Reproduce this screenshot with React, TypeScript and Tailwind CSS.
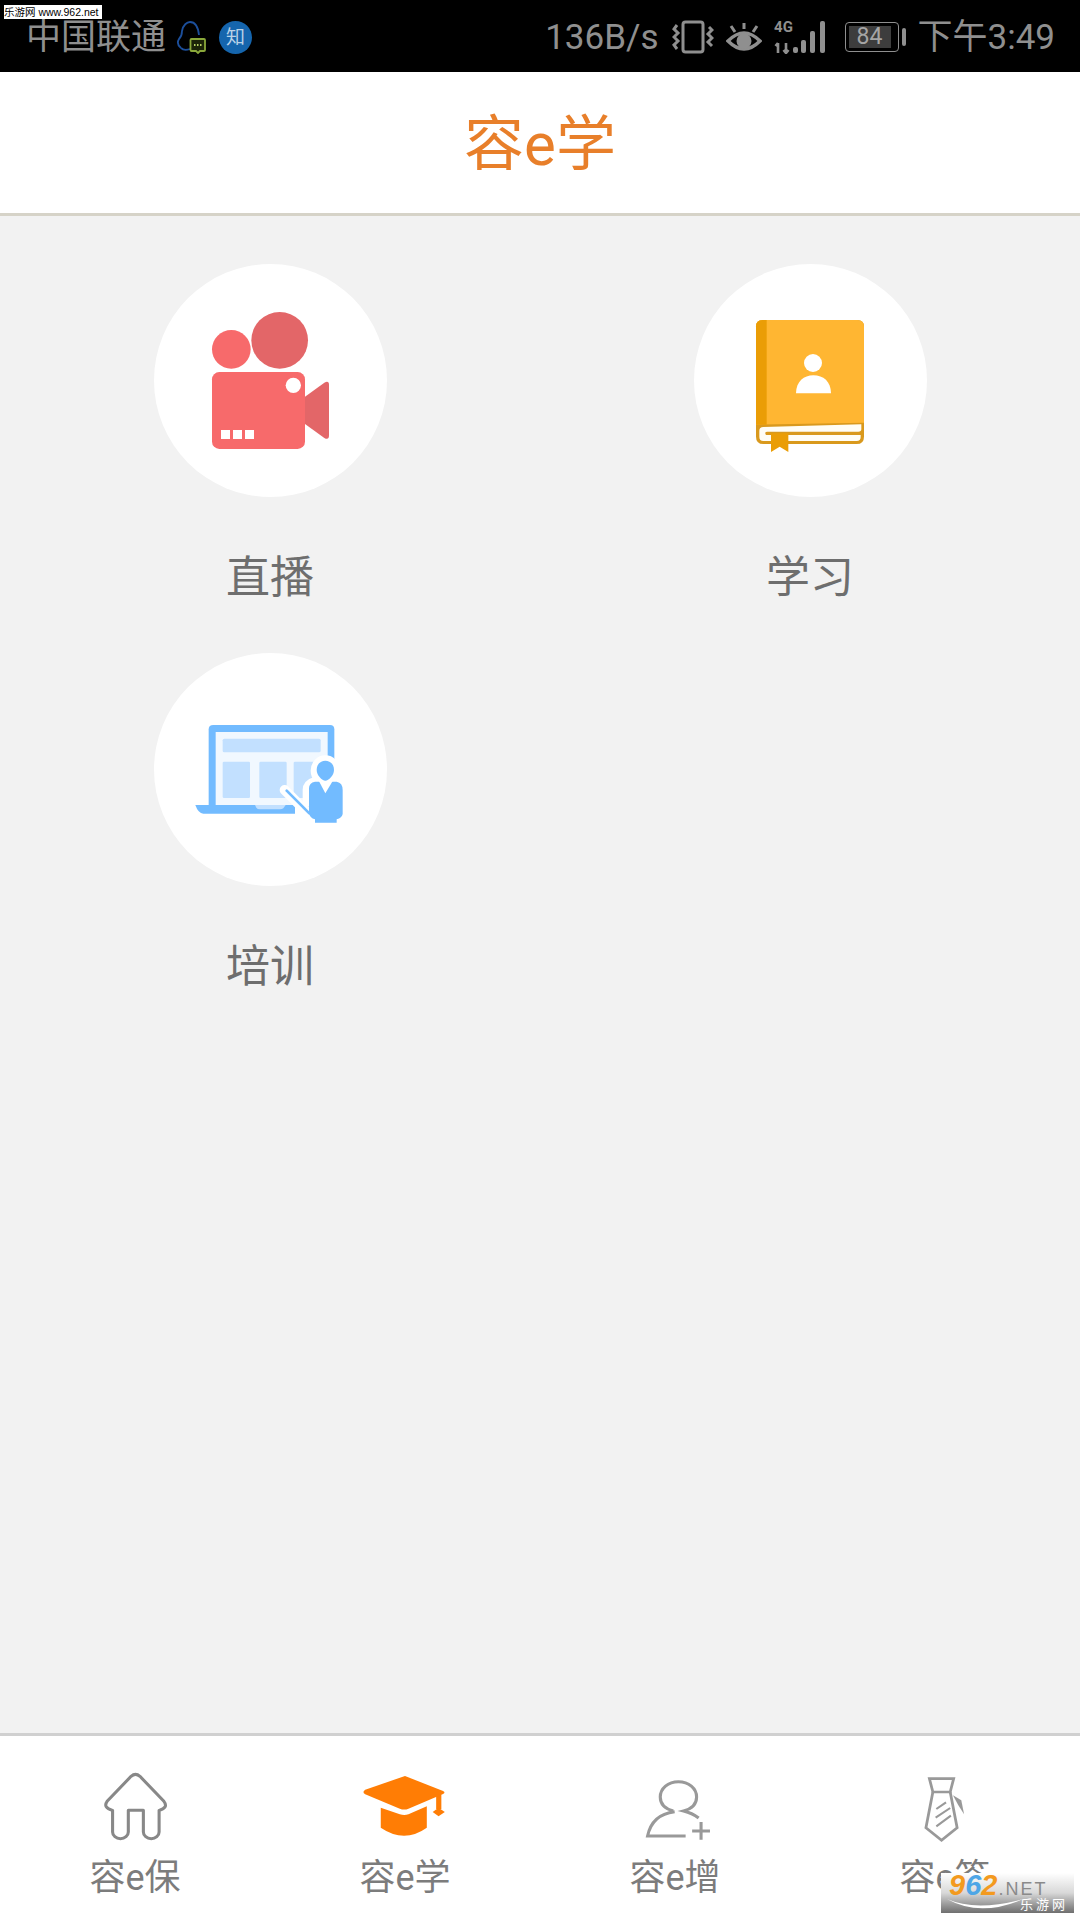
const blue = "#72bbff";
const lightBlue = "#c2e0ff";

function CameraIcon() {
  return (
    <svg viewBox="42 42 699 699" className="w-[233px] h-[233px]">
      <circle cx="274" cy="298" r="58" fill="#f76a6b" />
      <circle cx="419" cy="271" r="85" fill="#e36668" />
      <path d="M495 440 L553 398 Q567 390 567 405 V555 Q567 572 553 564 L495 522 Z" fill="#e36668" />
      <rect x="216" y="366" width="279" height="231" rx="22" fill="#f76a6b" />
      <circle cx="460" cy="406" r="23" fill="#fff" />
      <rect x="243" y="540" width="27" height="27" fill="#fff" />
      <rect x="279" y="540" width="27" height="27" fill="#fff" />
      <rect x="315" y="540" width="27" height="27" fill="#fff" />
    </svg>
  );
}

function BookIcon() {
  return (
    <svg viewBox="42 42 699 699" className="w-[233px] h-[233px]">
      <path d="M248 210 H532 Q552 210 552 230 V560 Q552 582 530 582 H250 Q228 582 228 560 V230 Q228 210 248 210 Z" fill="#d9991d" />
      <path d="M248 210 H532 Q552 210 552 230 V518 L228 524 V230 Q228 210 248 210 Z" fill="#ffb632" />
      <path d="M248 210 H260 V524 H228 V230 Q228 210 248 210 Z" fill="#ea9d06" />
      <path d="M250 531 L544 523 V538 Q544 545 535 545 H262 Q252 545 258 555 H542 V562 Q542 573 530 573 H250 Q238 573 238 560 V542 Q238 531 250 531 Z" fill="#fffdf5" />
      <path d="M273 550 H325 V606 L299 590 L273 606 Z" fill="#ea9d06" />
      <circle cx="399" cy="339" r="27" fill="#fff" />
      <path d="M348 430 C348 395 372 376 400 376 C430 376 453 395 453 430 Z" fill="#fff" />
    </svg>
  );
}

function TrainingIcon() {
  return (
    <svg viewBox="42 39 699 699" className="w-[233px] h-[233px]">
      <path d="M220 255 H570 Q583 255 583 268 V500 H206 V268 Q206 255 220 255 Z" fill={blue} />
      <rect x="227" y="276" width="336" height="220" fill="#f1f8ff" />
      <rect x="248" y="296" width="294" height="41" rx="5" fill={lightBlue} />
      <rect x="248" y="365" width="82" height="109" rx="4" fill={lightBlue} />
      <rect x="358" y="365" width="82" height="109" rx="4" fill={lightBlue} />
      <rect x="461" y="365" width="80" height="109" rx="4" fill={lightBlue} />
      <path d="M166 495 H465 V521 H190 Q175 521 166 495 Z" fill={blue} />
      <path d="M345 495 H437 L430 505 Q426 508 420 508 H360 Q352 508 349 503 Z" fill={lightBlue} />
      <ellipse cx="556" cy="392" rx="44" ry="46" fill="#fff" />
      <path d="M525 410 H612 V500 H488 V450 Q488 420 525 410 Z" fill="#fff" />
      <path d="M434 450 L510 526" stroke="#fff" strokeWidth="30" strokeLinecap="round" />
      <path d="M440 452 L508 520" stroke={blue} strokeWidth="8" strokeLinecap="round" />
      <path d="M525 425 H590 Q608 428 608 450 V522 Q606 534 590 538 V548 H525 V538 Q509 534 507 520 V445 Q507 428 525 425 Z" fill={blue} />
      <path d="M535 420 H580 L556 460 Z" fill="#fff" />
      <path d="M556 362 C572 362 582 374 582 390 C582 406 566 422 556 422 C546 422 530 406 530 390 C530 374 540 362 556 362 Z" fill={blue} />
    </svg>
  );
}

function HomeIcon() {
  return (
    <svg viewBox="0 0 190 216" preserveAspectRatio="none" className="w-[65px] h-[72px]">
      <path
        d="M80 13 L10 88 Q-3 107 26 115 V180 A23 20 0 0 0 72 180 V115 H116 V180 A23 20 0 0 0 162 180 V115 Q190 107 176 88 L106 13 Q93 1 80 13 Z"
        transform="translate(2 0)"
        fill="none"
        stroke="#888"
        strokeWidth="9"
        strokeLinejoin="round"
      />
    </svg>
  );
}

function CapIcon() {
  return (
    <svg viewBox="1050 155 260 216" preserveAspectRatio="none" className="w-[90px] h-[72px]">
      <path d="M1180 167 L1290 212 Q1298 217 1290 221 L1190 265 Q1178 270 1165 265 L1065 222 Q1055 215 1065 208 Z" fill="#ff7d05" />
      <rect x="1270" y="222" width="15" height="44" fill="#ff7d05" />
      <path d="M1277 262 L1295 275 L1277 288 L1260 275 Z" fill="#ff7d05" />
      <path d="M1110 262 L1165 282 Q1178 286 1190 282 L1243 258 V322 Q1178 370 1110 322 Z" fill="#ff7d05" />
    </svg>
  );
}

function AddUserIcon() {
  return (
    <svg viewBox="290 155 210 216" preserveAspectRatio="none" className="w-[72px] h-[72px]">
      <g fill="none" stroke="#999" strokeWidth="9">
        <path d="M390 272 C365 265 352 250 352 230 C352 204 375 184 405 184 C435 184 458 204 458 230 C458 250 445 265 420 272 Q445 278 464 293" />
        <path d="M394 274 Q328 282 315 347 H426" />
        <path d="M445 332 H497 M471 305 V358" />
      </g>
    </svg>
  );
}

function TieIcon() {
  return (
    <svg viewBox="1100 155 150 216" preserveAspectRatio="none" className="w-[52px] h-[72px]">
      <g fill="none" stroke="#999" strokeWidth="8">
        <path d="M1130 175 H1200 L1190 215 H1140 Z" />
        <path d="M1140 215 L1120 322 L1165 360 L1210 322 L1190 215" />
        <path d="M1150 266 L1178 246 M1148 292 L1190 263 M1150 318 L1192 286" strokeWidth="6" />
      </g>
      <path d="M1198 225 L1222 240 L1230 282 Q1212 255 1198 225 Z" fill="#999" />
    </svg>
  );
}

function StatusBar() {
  return (
    <div className="h-[72px] bg-black flex items-center justify-between pl-[26px] pr-[25px] pt-[2px] text-[#8f8f8f] text-[35px] leading-none shrink-0">
      <div className="flex items-center">
        <span className="w-[141px] whitespace-nowrap">中国联通</span>
        <svg viewBox="0 0 30 33" className="w-[30px] h-[33px] ml-[9px]">
          <path d="M5 27 Q0 23 3 18 Q6 15 6 10 C7 4 11 1 14 1 C19 1 22 5 23 14" fill="none" stroke="#1c4f9c" strokeWidth="1.8" />
          <path d="M5 27 Q8 30 14 28" fill="none" stroke="#1c4f9c" strokeWidth="1.8" />
          <path d="M15.5 18 H28 Q29 18 29 19 V29 Q29 30 28 30 H24 L22 32 L20 30 H15.5 Q14.5 30 14.5 29 V19 Q14.5 18 15.5 18 Z" fill="#1c2408" stroke="#8aa83a" strokeWidth="1.8" />
          <path d="M18 24 H19.5 M21 24 H22.5 M24 24 H25.5" stroke="#b5d060" strokeWidth="1.8" />
        </svg>
        <span className="w-[33px] h-[33px] ml-[13px] rounded-full bg-[#1565ad] text-[#b9d2e8] text-[19px] flex items-center justify-center">知</span>
      </div>
      <div className="flex items-center">
        <span className="whitespace-nowrap">136B/s</span>
        <svg viewBox="0 0 42 34" className="w-[42px] h-[34px] ml-[13px]">
          <rect x="11" y="2" width="20" height="30" rx="2.5" fill="none" stroke="#8f8f8f" strokeWidth="3" />
          <path d="M5 5 L2 9 L6 13 L2 17 L6 21 L2 25 L5 29 M37 7 L40 10 L36 14 L40 18 L36 22 L40 26" fill="none" stroke="#8f8f8f" strokeWidth="3" />
        </svg>
        <svg viewBox="0 0 36 32" className="w-[36px] h-[32px] ml-[12px]">
          <path d="M2 20 Q18 4 34 20 Q18 36 2 20 Z" fill="none" stroke="#8f8f8f" strokeWidth="3.4" />
          <circle cx="18" cy="20" r="7.5" fill="#8f8f8f" />
          <path d="M5 5 L9 11 M18 2 V8 M31 5 L27 11" stroke="#8f8f8f" strokeWidth="3" />
        </svg>
        <div className="relative w-[54px] h-[34px] ml-[12px]">
          <span className="absolute left-0 top-0 w-[20px] text-[15px] leading-[14px] font-bold text-center">4G</span>
          <svg viewBox="0 0 54 34" className="w-[54px] h-[34px]">
            <path d="M4 33 V23 M1.5 26 L4 23 M12 23 V33 M9.5 30 L12 33 L14.5 30" fill="none" stroke="#8f8f8f" strokeWidth="2.6" />
            <rect x="19" y="27" width="5" height="6" rx="2" fill="#8f8f8f" />
            <rect x="27" y="20" width="5" height="13" rx="2" fill="#8f8f8f" />
            <rect x="36" y="11" width="5" height="22" rx="2" fill="#8f8f8f" />
            <rect x="46" y="1" width="5" height="32" rx="2" fill="#8f8f8f" />
          </svg>
        </div>
        <div className="flex items-center ml-[17px]">
          <div className="w-[54px] h-[30px] rounded-[4px] border border-[#8f8f8f] p-[3px]">
            <div className="w-[42px] h-full bg-[#3d3d3d] text-[#a5a5a5] text-[23px] leading-[22px] text-center">84</div>
          </div>
          <div className="w-[4px] h-[18px] ml-[3px] rounded-sm bg-[#8f8f8f]" />
        </div>
        <span className="ml-[12px] whitespace-nowrap">下午3:49</span>
      </div>
    </div>
  );
}

const entries = [
  { label: "直播", icon: <CameraIcon /> },
  { label: "学习", icon: <BookIcon /> },
  { label: "培训", icon: <TrainingIcon /> },
];

const tabs = [
  { label: "容e保", icon: <HomeIcon /> },
  { label: "容e学", icon: <CapIcon /> },
  { label: "容e增", icon: <AddUserIcon /> },
  { label: "容e签", icon: <TieIcon /> },
];

export default function App() {
  return (
    <div className="relative w-[1080px] h-[1920px] flex flex-col overflow-hidden bg-[#f2f2f2] font-['Roboto','Noto_Sans_CJK_SC',sans-serif]">
      {/* 水印 */}
      <div className="absolute left-[4px] top-[5px] h-[14px] w-[98px] bg-white text-black text-[10.5px] leading-[14px] whitespace-nowrap font-['Liberation_Sans','Noto_Sans_CJK_SC',sans-serif]">
        乐游网 www.962.net
      </div>

      <StatusBar />

      <header className="h-[144px] shrink-0 bg-white border-b-[3px] border-[#d6d3c8] flex items-center justify-center pt-[4px]">
        <h1 className="text-[60px] leading-none font-normal text-[#e87f2a]">容e学</h1>
      </header>

      <main className="flex-1 pt-[48px]">
        <div className="grid grid-cols-2 gap-y-[52px]">
          {entries.map((item) => (
            <div key={item.label} className="flex flex-col items-center">
              <div className="w-[233px] h-[233px] rounded-full bg-white">{item.icon}</div>
              <div className="mt-[56px] mb-[-2px] h-[50px] text-[44px] leading-[50px] text-[#6e6e6e]">{item.label}</div>
            </div>
          ))}
        </div>
      </main>

      <nav className="h-[187px] shrink-0 bg-white border-t-[3px] border-[#d0d0d0] grid grid-cols-4 pt-[36px]">
        {tabs.map((tab) => (
          <div key={tab.label} className="flex flex-col items-center">
            <div className="h-[72px] flex items-center justify-center">{tab.icon}</div>
            <div className="mt-[12px] text-[36px] leading-[44px] text-[#7c7c7c]">{tab.label}</div>
          </div>
        ))}
      </nav>

      <div className="absolute left-[941px] top-[1873px] w-[133px] h-[40px] bg-gradient-to-b from-white via-[#d8d8d8] to-[#6f6f6f] font-['Liberation_Sans','Noto_Sans_CJK_SC',sans-serif]">
        <div className="flex items-baseline pl-[8px] h-[24px] leading-[24px] whitespace-nowrap">
          <span className="text-[29px] font-bold italic text-[#f39a1f]">9</span>
          <span className="text-[29px] font-bold italic text-[#4ea6e6]">6</span>
          <span className="text-[29px] font-bold italic text-[#f39a1f]">2</span>
          <span className="text-[18px] text-[#8a8a8a] ml-[1px] tracking-[2px]">.NET</span>
        </div>
        <svg viewBox="0 0 80 14" className="absolute left-[6px] bottom-[3px] w-[78px] h-[14px]">
          <path d="M0 3 Q30 16 78 3 Q34 22 0 3 Z" fill="#fff" />
        </svg>
        <div className="absolute right-[6px] bottom-[1px] text-[13px] leading-[15px] tracking-[3px] text-white">乐游网</div>
      </div>
    </div>
  );
}
